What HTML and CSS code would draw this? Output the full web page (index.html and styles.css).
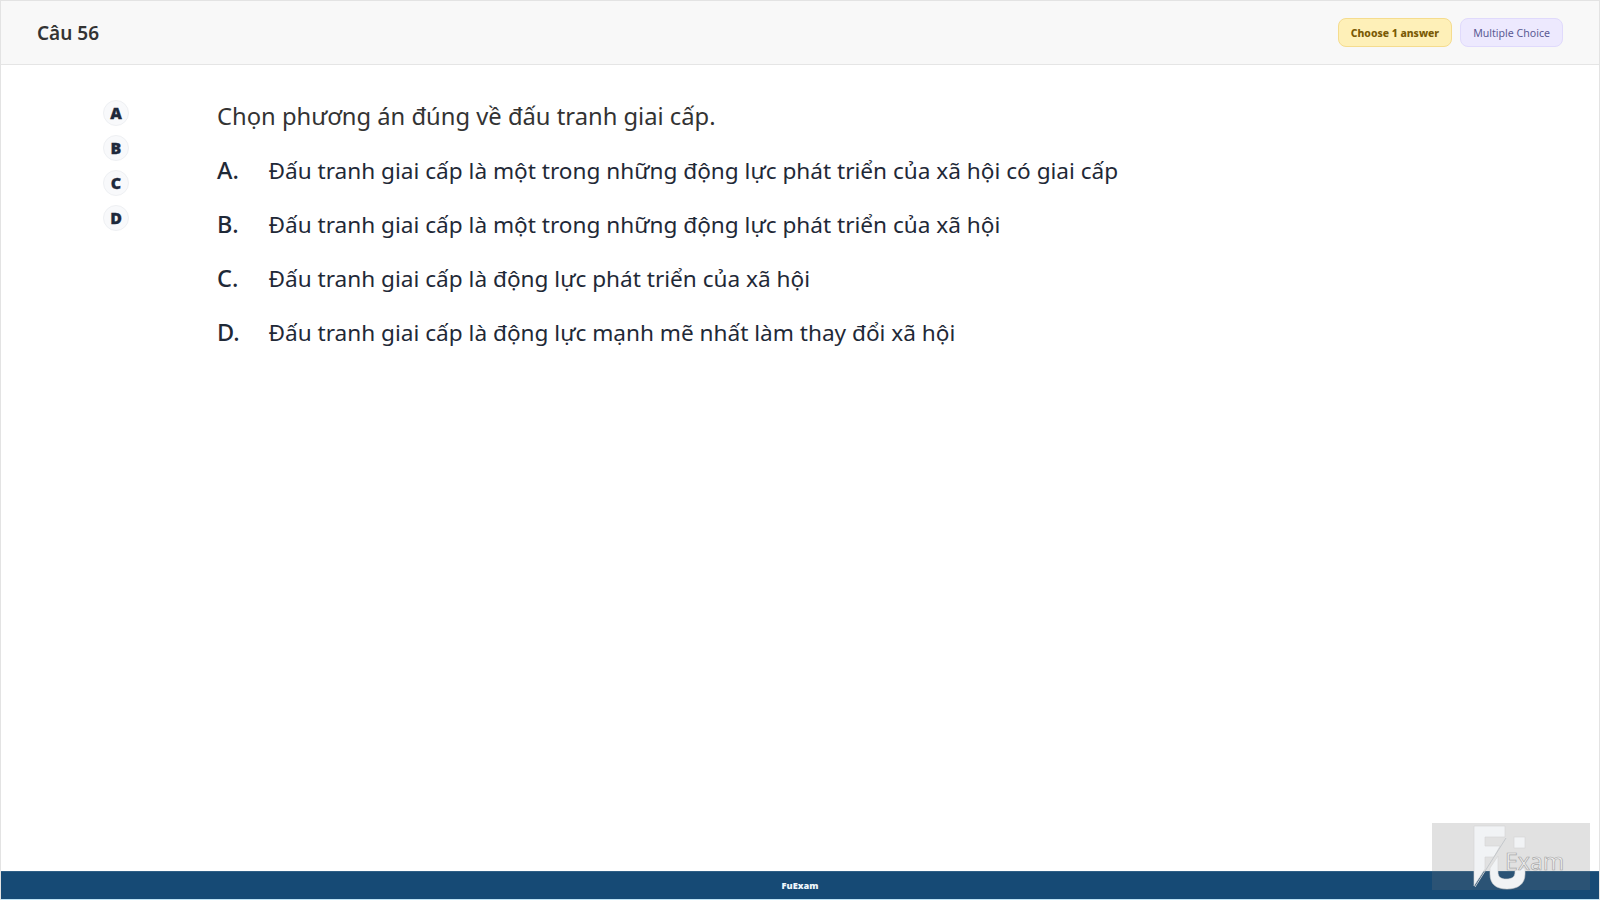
FILE: index.html
```html
<!DOCTYPE html>
<html lang="vi">
<head>
<meta charset="utf-8">
<title>Câu 56</title>
<link rel="stylesheet" href="styles.css">
</head>
<body>
<div class="page">
  <header class="header">
    <h1 class="title">Câu 56</h1>
    <div class="badges">
      <span class="badge badge-choose">Choose 1 answer</span>
      <span class="badge badge-type">Multiple Choice</span>
    </div>
  </header>
  <main class="main">
    <div class="picks">
      <button class="pick">A</button>
      <button class="pick">B</button>
      <button class="pick">C</button>
      <button class="pick">D</button>
    </div>
    <div class="question">
      <p class="stem">Chọn phương án đúng về đấu tranh giai cấp.</p>
      <div class="option"><span class="label">A.</span><span>Đấu tranh giai cấp là một trong những động lực phát triển của xã hội có giai cấp</span></div>
      <div class="option"><span class="label">B.</span><span>Đấu tranh giai cấp là một trong những động lực phát triển của xã hội</span></div>
      <div class="option"><span class="label">C.</span><span>Đấu tranh giai cấp là động lực phát triển của xã hội</span></div>
      <div class="option"><span class="label">D.</span><span>Đấu tranh giai cấp là động lực mạnh mẽ nhất làm thay đổi xã hội</span></div>
    </div>
  </main>
  <footer class="footer">FuExam</footer>
  <div class="watermark">
    <svg class="wm-logo" viewBox="0 0 158 67" width="158" height="67" aria-hidden="true">
      <path class="wm-fill" d="M42 3H73V14H53V23H68L62 34H53V46L42 63Z"/>
      <path class="wm-line" d="M74 15L43 64"/>
      <rect class="wm-fill" x="82" y="14" width="11" height="11"/>
      <path class="wm-fill" d="M66 33V49C66 54 69 56 74 56C80 56 83 54 83 49V45H93V51C93 61 86 66 75 66C64 66 58 61 58 51V45Z"/>
      <text class="wm-text" x="73" y="46.5">Exam</text>
    </svg>
  </div>
</div>
</body>
</html>
```
FILE: styles.css
```css
* { box-sizing: border-box; }
html, body { margin: 0; height: 100%; }
body { background: #fff; font-family: "Noto Sans", "Open Sans", sans-serif; color: #1f2937; }
.page { position: relative; height: 900px; display: flex; flex-direction: column; border: 1px solid #e3e3e3; border-bottom: 0; overflow: hidden; }
.header { height: 64px; flex: none; display: flex; align-items: center; justify-content: space-between; padding: 0 36px; background: #f8f8f8; border-bottom: 1px solid #e5e5e5; }
.title { margin: 0; font-size: 19px; font-weight: 600; color: #333; }
.badges { display: flex; gap: 8px; }
.badge { height: 29px; display: flex; align-items: center; padding: 0 12px; border-radius: 8px; font-size: 10.6px; }
.badge-choose { background: #fef0b8; border: 1px solid #f5dc8e; color: #7a5a05; font-size: 10.4px; font-weight: 800; }
.badge-type { background: #ede9fe; border: 1px solid #e0dafc; color: #5b5a94; }
.main { flex: 1; display: flex; padding-top: 33px; }
.picks { width: 216px; flex: none; padding: 2px 0 0 102px; display: flex; flex-direction: column; gap: 9px; }
.pick { width: 26px; height: 26px; padding: 0 0 1px; border-radius: 50%; border: 1px solid #eef0f3; background: #f8f9fb; font: 900 16px "Noto Sans", sans-serif; color: #1e293b; -webkit-text-stroke: .3px #1e293b; display: flex; align-items: center; justify-content: center; }
.question { flex: 1; }
.stem { margin: 1px 0 10px; font-size: 23.75px; line-height: 34px; color: #333; }
.option { display: flex; align-items: center; height: 54px; font-size: 22.62px; color: #1f2937; }
.label { width: 51.5px; flex: none; font-size: 23.5px; font-weight: 500; }
.footer { height: 29px; flex: none; display: flex; align-items: center; justify-content: center; background: #164a75; color: #eef6fb; font-size: 9.2px; font-weight: 900; border-top: 1px solid #2f5f86; border-bottom: 1px solid #bfe3f5; }
.watermark { position: absolute; left: 1431px; top: 822px; width: 158px; height: 67px; background: rgba(120, 120, 120, 0.22); }
.wm-logo { display: block; }
.wm-fill { fill: #f1f3f5; stroke: #d4d4d4; stroke-width: .6px; }
.wm-line { stroke: #c4c8cc; stroke-width: 1px; fill: none; }
.wm-text { font: 400 23px "Noto Sans", sans-serif; fill: #f1f1f1; stroke: #a8a8a8; stroke-width: .7px; }
```
